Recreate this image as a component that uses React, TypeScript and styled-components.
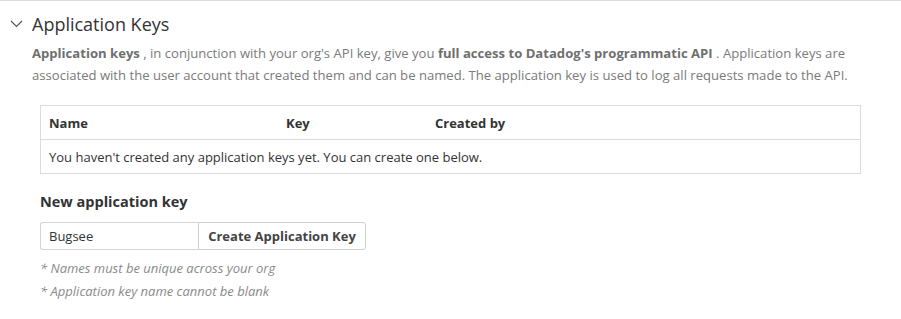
import { createGlobalStyle, styled } from "styled-components";

const GlobalStyle = createGlobalStyle`
  html, body {
    margin: 0;
    padding: 0;
    background: #fff;
    font-family: "Open Sans", "Noto Sans", sans-serif;
  }
`;

const Page = styled.div`
  width: 901px;
  height: 319px;
  border-top: 1px solid #dcdcdc;
  box-sizing: border-box;
`;

const Header = styled.div`
  display: flex;
  align-items: center;
  gap: 9px;
  padding: 10px 0 0 10px;
  height: 26px;
`;

const Title = styled.h2`
  margin: 0;
  font-size: 18px;
  font-weight: 400;
  color: #333;
`;

const Intro = styled.p`
  margin: 5px 0 0 32px;
  font-size: 13.1px;
  line-height: 22px;
  color: #7a7a7a;
  width: 855px;
  b {
    font-weight: 700;
    color: #6f6f6f;
  }
`;

const Body = styled.div`
  padding: 0 40px;
`;

const Table = styled.table`
  margin-top: 19px;
  width: 821px;
  border-collapse: collapse;
  border: 1px solid #dcdcdc;
  font-size: 13px;
  color: #333;
  th {
    text-align: left;
    font-weight: 700;
    height: 33px;
    padding: 0 8px;
    border-bottom: 1px solid #dcdcdc;
  }
  td {
    height: 33px;
    padding: 0 8px;
  }
`;

const SubTitle = styled.h3`
  margin: 18px 0 0;
  font-size: 14.5px;
  font-weight: 700;
  color: #333;
  line-height: 20px;
`;

const Form = styled.div`
  display: flex;
  margin-top: 10px;
  height: 28px;
`;

const Input = styled.input`
  width: 158px;
  box-sizing: border-box;
  border: 1px solid #d4d4d4;
  border-right: none;
  border-radius: 3px 0 0 3px;
  padding: 0 8px;
  font-family: inherit;
  font-size: 13px;
  color: #333;
  outline: none;
`;

const Button = styled.button`
  width: 168px;
  box-sizing: border-box;
  border: 1px solid #cfcfcf;
  border-radius: 0 3px 3px 0;
  background: #fff;
  font-family: inherit;
  font-size: 13px;
  font-weight: 700;
  color: #444;
  padding: 0;
`;

const Notes = styled.div`
  margin-top: 7px;
`;

const Note = styled.div`
  font-size: 13px;
  font-style: italic;
  color: #8a8a8a;
  line-height: 23px;
`;

const Chevron = () => (
  <svg width="13" height="8" viewBox="0 0 13 8">
    <path d="M1 1 L6.5 6.5 L12 1" fill="none" stroke="#555" strokeWidth="1.2" />
  </svg>
);

const App = () => {
  return (
    <Page>
      <GlobalStyle />
      <Header>
        <Chevron />
        <Title>Application Keys</Title>
      </Header>
      <Intro>
        <b>Application keys</b> , in conjunction with your org's API key, give you{" "}
        <b>full access to Datadog's programmatic API</b> . Application keys are
        associated with the user account that created them and can be named. The
        application key is used to log all requests made to the API.
      </Intro>
      <Body>
        <Table>
          <thead>
            <tr>
              <th style={{ width: 221 }}>Name</th>
              <th style={{ width: 133 }}>Key</th>
              <th>Created by</th>
            </tr>
          </thead>
          <tbody>
            <tr>
              <td colSpan={3}>
                You haven't created any application keys yet. You can create one below.
              </td>
            </tr>
          </tbody>
        </Table>
        <SubTitle>New application key</SubTitle>
        <Form>
          <Input defaultValue="Bugsee" />
          <Button>Create Application Key</Button>
        </Form>
        <Notes>
          <Note>* Names must be unique across your org</Note>
          <Note>* Application key name cannot be blank</Note>
        </Notes>
      </Body>
    </Page>
  );
};

export default App;
